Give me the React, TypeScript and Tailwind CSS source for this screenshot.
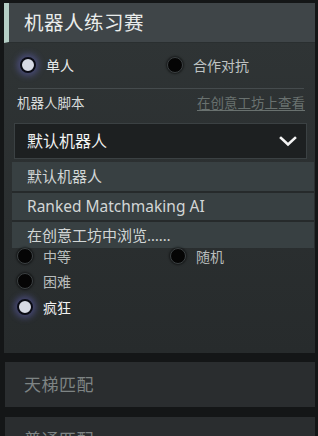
import React from "react";

const FONT = { fontFamily: "'Noto Sans', 'Noto Sans CJK SC', sans-serif" };

function Radio({ on }: { on?: boolean }) {
  return on ? (
    <span className="block w-[16px] h-[16px] shrink-0 rounded-full bg-[#d6d9e4] border-[2.5px] border-[#0a0b14] shadow-[0_0_6px_3px_rgba(105,105,200,0.45)]" />
  ) : (
    <span className="block w-[16px] h-[16px] shrink-0 rounded-full bg-[#050505] border border-[#3c4143] shadow-[0_0_2px_1px_rgba(0,0,0,0.5)]" />
  );
}

export default function App() {
  return (
    <div
      style={FONT}
      className="w-[318px] h-[436px] overflow-hidden bg-[#141617] pt-[3px] pl-[4px] pr-[3px]"
    >
      {/* Main panel */}
      <div className="h-[350px] bg-gradient-to-b from-[#303536] to-[#272b2c] flex flex-col">
        <div className="h-[40px] shrink-0 flex items-center bg-[#3f4548] border-l-[5px] border-[#b5cfc6] border-b border-b-[#2a2f30] pl-[15px]">
          <span className="text-[19.5px] leading-none text-[#e9eceb] tracking-[0.5px]">机器人练习赛</span>
        </div>

        <div className="pl-[10px] pr-[8px] flex flex-col">
          <div className="mt-[11px] h-[22px] flex items-center">
            <div className="w-[147px] ml-[6px] flex items-center gap-[10px]">
              <Radio on />
              <span className="text-[14px] text-[#e8eaea]">单人</span>
            </div>
            <div className="flex items-center gap-[10px]">
              <Radio />
              <span className="text-[14px] text-[#bfc3c3]">合作对抗</span>
            </div>
          </div>

          <div className="mt-[12px] ml-[4px] mr-[3px] h-px bg-[#454b4d]" />

          <div className="mt-[4px] h-[20px] flex items-center justify-between pl-[3px] pr-[2px]">
            <span className="text-[13.5px] text-[#d6dada]">机器人脚本</span>
            <span className="text-[13.5px] text-[#69716f] underline underline-offset-2">在创意工坊上查看</span>
          </div>

          <div className="mt-[10px] h-[36px] flex items-center justify-between bg-[#1d2021] border border-[#3b4143] pl-[12px] pr-[9px]">
            <span className="text-[16px] text-[#f2f3f3]">默认机器人</span>
            <svg width="18" height="12" viewBox="0 0 18 12" fill="none">
              <path d="M2 3 L9 9.5 L16 3" stroke="#f4f4f4" strokeWidth="2.6" strokeLinecap="square" />
            </svg>
          </div>

          <div className="mt-[3px] -ml-[2px] -mr-[7px] bg-[#384042] flex flex-col">
            <div className="h-[29px] flex items-center pl-[15px] text-[15px] text-[#d2d6d6]">默认机器人</div>
            <div className="h-[29px] flex items-center pl-[15px] text-[15.5px] text-[#d2d6d6] border-t-2 border-[#262a2b]">
              Ranked Matchmaking AI
            </div>
            <div className="h-[28px] flex items-center pl-[15px] text-[15px] text-[#d2d6d6] border-t-2 border-[#262a2b]">
              在创意工坊中浏览……
            </div>
          </div>

          <div className="-mt-[2px] h-[20px] flex items-center">
            <div className="w-[153px] ml-[3px] flex items-center gap-[10px]">
              <Radio />
              <span className="text-[14px] text-[#b9bdbd]">中等</span>
            </div>
            <div className="flex items-center gap-[10px]">
              <Radio />
              <span className="text-[14px] text-[#b9bdbd]">随机</span>
            </div>
          </div>
          <div className="mt-[5px] h-[20px] flex items-center ml-[3px] gap-[10px]">
            <Radio />
            <span className="text-[14px] text-[#b9bdbd]">困难</span>
          </div>
          <div className="mt-[6px] h-[20px] flex items-center ml-[3px] gap-[10px]">
            <Radio on />
            <span className="text-[14px] text-[#f2f2f2]">疯狂</span>
          </div>
        </div>
      </div>

      <div className="mt-[9px] ml-[1px] h-[45px] flex items-center bg-[#2a2d2f] pl-[19px]">
        <span className="text-[17px] text-[#7e8484] tracking-[0.5px]">天梯匹配</span>
      </div>

      <div className="mt-[10px] ml-[1px] h-[45px] flex items-center bg-[#2a2d2f] pl-[19px]">
        <span className="text-[17px] text-[#7e8484] tracking-[0.5px]">普通匹配</span>
      </div>
    </div>
  );
}
